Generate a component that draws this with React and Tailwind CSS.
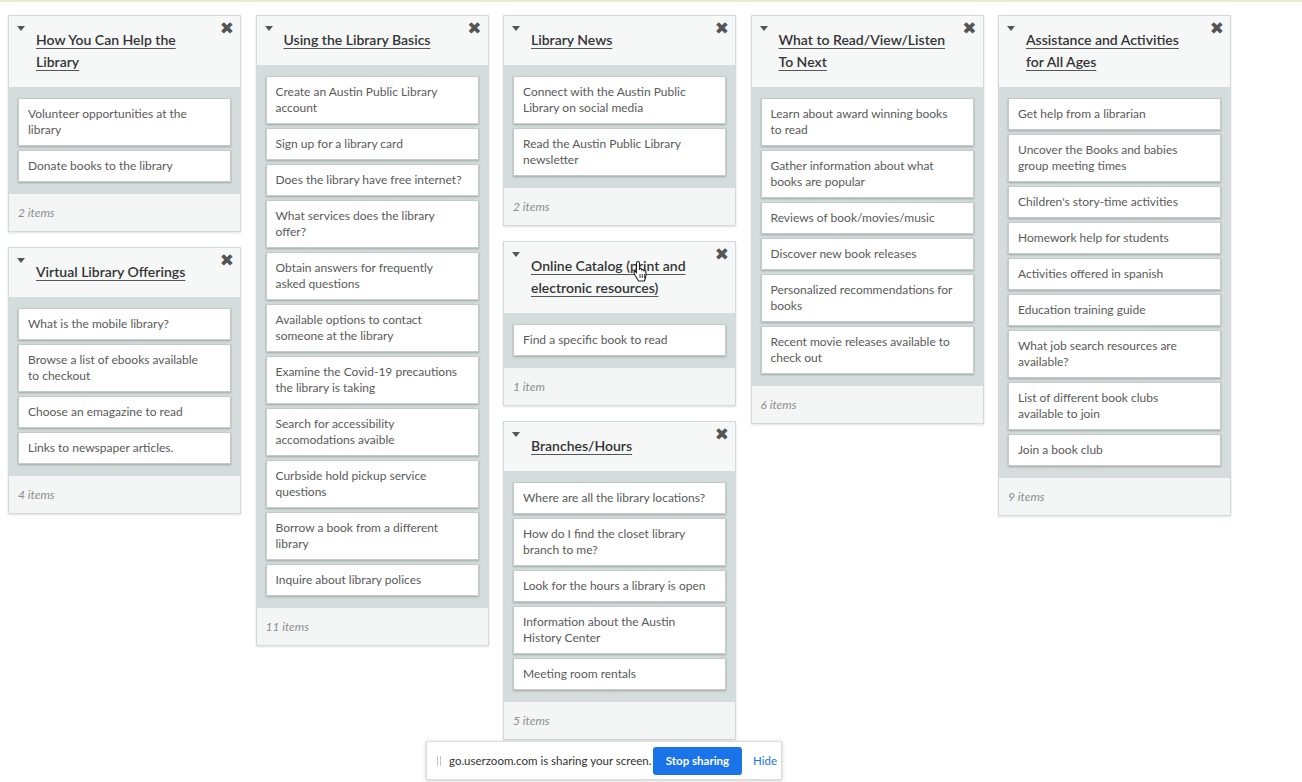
import React from 'react';

const columns = [
    [
        {
            title: ['How You Can Help the', 'Library'],
            items: ['Volunteer opportunities at the\nlibrary', 'Donate books to the library'],
            count: '2 items',
        },
        {
            title: ['Virtual Library Offerings'],
            items: [
                'What is the mobile library?',
                'Browse a list of ebooks available\nto checkout',
                'Choose an emagazine to read',
                'Links to newspaper articles.',
            ],
            count: '4 items',
        },
    ],
    [
        {
            title: ['Using the Library Basics'],
            items: [
                'Create an Austin Public Library\naccount',
                'Sign up for a library card',
                'Does the library have free internet?',
                'What services does the library\noffer?',
                'Obtain answers for frequently\nasked questions',
                'Available options to contact\nsomeone at the library',
                'Examine the Covid-19 precautions\nthe library is taking',
                'Search for accessibility\naccomodations avaible',
                'Curbside hold pickup service\nquestions',
                'Borrow a book from a different\nlibrary',
                'Inquire about library polices',
            ],
            count: '11 items',
        },
    ],
    [
        {
            title: ['Library News'],
            items: [
                'Connect with the Austin Public\nLibrary on social media',
                'Read the Austin Public Library\nnewsletter',
            ],
            count: '2 items',
        },
        {
            title: ['Online Catalog (print and', 'electronic resources)'],
            items: ['Find a specific book to read'],
            count: '1 item',
            cursor: true,
        },
        {
            title: ['Branches/Hours'],
            items: [
                'Where are all the library locations?',
                'How do I find the closet library\nbranch to me?',
                'Look for the hours a library is open',
                'Information about the Austin\nHistory Center',
                'Meeting room rentals',
            ],
            count: '5 items',
        },
    ],
    [
        {
            title: ['What to Read/View/Listen', 'To Next'],
            items: [
                'Learn about award winning books\nto read',
                'Gather information about what\nbooks are popular',
                'Reviews of book/movies/music',
                'Discover new book releases',
                'Personalized recommendations for\nbooks',
                'Recent movie releases available to\ncheck out',
            ],
            count: '6 items',
        },
    ],
    [
        {
            title: ['Assistance and Activities', 'for All Ages'],
            items: [
                'Get help from a librarian',
                'Uncover the Books and babies\ngroup meeting times',
                "Children's story-time activities",
                'Homework help for students',
                'Activities offered in spanish',
                'Education training guide',
                'What job search resources are\navailable?',
                'List of different book clubs\navailable to join',
                'Join a book club',
            ],
            count: '9 items',
        },
    ],
];

const HandCursor = () => (
    <svg
        className="absolute left-[102px] top-[5px] pointer-events-none"
        width="16"
        height="22"
        viewBox="0 0 16 22"
    >
        <path
            d="M5 1.5c.9 0 1.5.6 1.5 1.5v6.5l.3-1.2c.9-.3 1.6.2 1.7 1l.1.8c.5-.9 1.8-.8 2.1.1l.1.7c.6-.7 1.9-.4 2 .6.3 2.2.3 4.3-.3 6.3L11.3 21H5.6L2.2 15.5 1 12.6c-.3-.9.6-1.6 1.4-1.1L3.5 13V3c0-.9.6-1.5 1.5-1.5z"
            fill="#fff"
            stroke="#222"
            strokeWidth="1.1"
            strokeLinejoin="round"
        />
        <path d="M7 14v4M9.2 14v4M11.4 14v4" stroke="#222" strokeWidth="0.9" />
    </svg>
);

const Card = ({ card }) => (
    <div className="w-[233px] border border-[#d3d8d8] bg-white shadow-[0_1px_2px_rgba(0,0,0,0.12)]">
        {/* Header */}
        <div className="relative bg-[#f6f8f8] pt-[13px] pb-[14px] pl-[27px] pr-[40px]">
            <span className="absolute left-[8px] top-[10px] w-0 h-0 border-l-[4.5px] border-r-[4.5px] border-t-[5px] border-l-transparent border-r-transparent border-t-[#555]"></span>
            <span className="absolute right-[6px] top-[4px] text-[17px] leading-[17px] font-bold text-[#555] font-['DejaVu_Sans',sans-serif]">✖</span>
            <div className="relative text-[14px] leading-[22px] font-semibold text-[#333] underline underline-offset-[3px] decoration-[#555] whitespace-nowrap font-['Lato',sans-serif]">
                {card.title.map((line, i) => (
                    <div key={i}>{line}</div>
                ))}
                {card.cursor && <HandCursor />}
            </div>
        </div>

        {/* Items */}
        <div className="bg-[#d4dcdc] px-[9px] pt-[11px] pb-[12px] flex flex-col gap-[4px]">
            {card.items.map((item, i) => (
                <div
                    key={i}
                    className="bg-white border border-[#c5cbcb] shadow-[0_1px_2px_rgba(0,0,0,0.25)] pl-[9px] pr-[6px] py-[7px] text-[12px] leading-[16px] text-[#5a5a5a] whitespace-pre-line font-['Lato',sans-serif]"
                >
                    {item}
                </div>
            ))}
        </div>

        {/* Footer */}
        <div className="h-[37px] bg-[#f4f6f6] pl-[9px] flex items-center text-[12px] italic text-[#8a8f8f] font-['Lato',sans-serif]">
            {card.count}
        </div>
    </div>
);

const App = () => {
    return (
        <div className="relative w-[1302px] h-[782px] bg-white overflow-hidden">
            <div className="h-[2px] bg-[#e5edcf]"></div>
            <div className="flex items-start gap-[14.5px] pl-[8px] pt-[13px]">
                {columns.map((col, ci) => (
                    <div key={ci} className="flex flex-col gap-[15px]">
                        {col.map((card, i) => (
                            <Card key={i} card={card} />
                        ))}
                    </div>
                ))}
            </div>

            {/* Screen sharing bar */}
            <div className="absolute left-[426px] top-[741px] w-[356px] h-[39px] bg-white border border-[#dcdcdc] shadow-[0_1px_4px_rgba(0,0,0,0.2)] flex items-center pl-[10px] whitespace-nowrap font-['Lato',sans-serif]">
                <span className="w-[12px] flex gap-[2px]">
                    <span className="w-px h-[10px] bg-[#c4c4c4]"></span>
                    <span className="w-px h-[10px] bg-[#c4c4c4]"></span>
                </span>
                <span className="w-[204px] text-[11.5px] text-[#333]">go.userzoom.com is sharing your screen.</span>
                <button className="h-[28px] w-[89px] rounded-[3px] bg-[#1a73e8] text-white text-[11.5px] font-bold">
                    Stop sharing
                </button>
                <span className="ml-[11px] text-[11.5px] text-[#1a73e8]">Hide</span>
            </div>
        </div>
    );
};

export default App;
